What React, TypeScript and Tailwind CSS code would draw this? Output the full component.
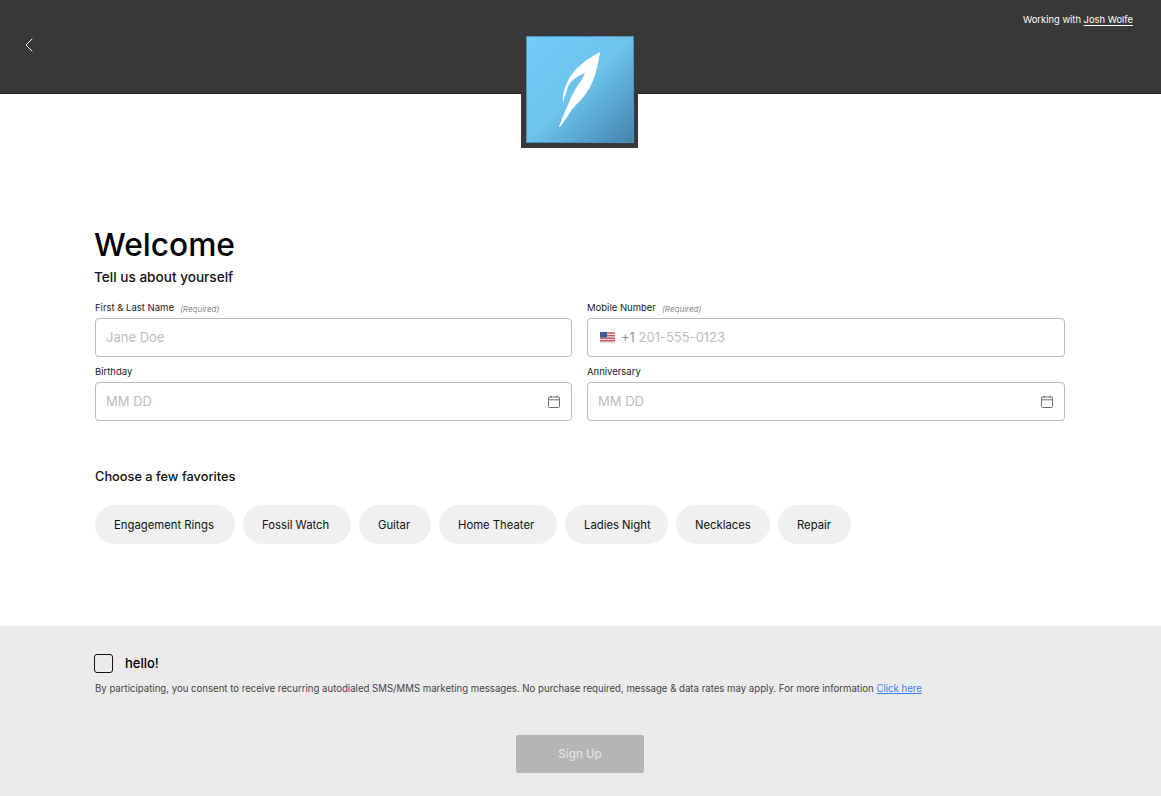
import { ChevronLeft } from "lucide-react"

const font = { fontFamily: "Inter, 'Noto Sans', sans-serif" }

const chips = [
  { name: "Engagement Rings", w: "w-[140px]" },
  { name: "Fossil Watch", w: "w-[108px]" },
  { name: "Guitar", w: "w-[72px]" },
  { name: "Home Theater", w: "w-[118px]" },
  { name: "Ladies Night", w: "w-[103px]" },
  { name: "Necklaces", w: "w-[94px]" },
  { name: "Repair", w: "w-[73px]" },
]

function Calendar() {
  return (
    <svg width="12" height="13" viewBox="0 0 12 13" fill="none" stroke="#6f6f6f" strokeWidth="1" className="shrink-0 -mt-[2px]">
      <rect x="0.5" y="2" width="11" height="10.5" rx="1" />
      <path d="M0.5 4.8H11.5M3 0.5V3M9 0.5V3" />
    </svg>
  )
}

function Flag() {
  return (
    <svg width="15" height="11" viewBox="0 0 15 11" className="shrink-0 -mt-[2px]">
      <rect width="15" height="11" rx="1" fill="#e9e4e6" />
      <path d="M0 1H15M0 3.6H15M0 6.2H15M0 8.8H15" stroke="#d0555f" strokeWidth="1.4" />
      <rect width="7" height="5.6" rx="0.5" fill="#3b5c9e" />
    </svg>
  )
}

function Label({ text, required }: { text: string; required?: boolean }) {
  return (
    <div className="h-[22px] flex items-center gap-[6px] text-[9.5px] text-[#222] pt-[3px]">
      <span>{text}</span>
      {required && <span className="text-[8px] italic text-[#8a8a8a]">(Required)</span>}
    </div>
  )
}

function Field({ children }: { children: React.ReactNode }) {
  return (
    <div className="h-[39px] flex items-center justify-between border border-[#b9b9b9] rounded-[4px] pl-[10px] pr-[11px] pt-[1px] text-[13px] text-[#bdbdbd] bg-white">
      {children}
    </div>
  )
}

export default function App() {
  return (
    <div className="min-h-[796px] flex flex-col bg-white" style={font}>
      <header className="relative h-[94px] shrink-0 bg-[#383838] border-b border-[#1c1c1c]">
        <div className="flex items-start justify-between pl-[17px] pr-[28px]">
          <ChevronLeft size={24} strokeWidth={1} color="#ffffff" className="mt-[33px]" />
          <div className="mt-[13px] text-[9.4px] text-white">
            Working with <span className="underline underline-offset-2">Josh Wolfe</span>
          </div>
        </div>
        <div className="absolute left-[521px] top-[31px] w-[117px] h-[117px] bg-[#383838] pl-[5px] pt-[5px]">
          <div className="w-[108px] h-[107px] bg-gradient-to-br from-[#72cdf7] via-[#6dc3ec] to-[#4484ad] flex items-center justify-center border border-[#4f93bb]">
            <svg width="48" height="84" viewBox="0 0 48 84">
              <path
                fill="#fff"
                d="M44 4C38 7 32 11 27 15C21 20 17 24 14 29C10 36 6 45 7 55C8 50 9 47 10 45C12 38 14 34 18 31C22 28 26 26 29 25C27 30 25 33 22 37C18 43 16 47 14 52C10 61 6 70 3 79L4 79C9 72 13 66 17 60C23 54 27 50 31 44C35 38 37 33 39 27C41 20 43 12 44 4Z"
              />
            </svg>
          </div>
        </div>
      </header>

      <main className="flex-1 pl-[95px] pr-[96px] pt-[132px] h-[532px]">
        <h1 className="text-[31.7px] leading-[38px] font-medium text-black -ml-[1px]">Welcome</h1>
        <h2 className="mt-[3px] text-[13.6px] leading-[20px] font-medium text-[#111] -ml-[1px]">Tell us about yourself</h2>
        <div className="mt-[9px] grid grid-cols-[477px_478px] gap-x-[15px] gap-y-[3px]">
          <div>
            <Label text="First & Last Name" required />
            <Field>Jane Doe</Field>
          </div>
          <div>
            <Label text="Mobile Number" required />
            <Field>
              <span className="ml-[2px] flex items-center gap-[6px]">
                <Flag />
                <span><span className="text-[#8f8f8f]">+1</span> 201-555-0123</span>
              </span>
            </Field>
          </div>
          <div>
            <Label text="Birthday" />
            <Field>MM DD<Calendar /></Field>
          </div>
          <div>
            <Label text="Anniversary" />
            <Field>MM DD<Calendar /></Field>
          </div>
        </div>
        <h3 className="mt-[46px] text-[12.8px] leading-[20px] font-medium text-[#111]">Choose a few favorites</h3>
        <div className="mt-[18px] flex gap-[8px]">
          {chips.map((c) => (
            <div key={c.name} className={`${c.w} h-[39px] rounded-full bg-[#f0f0f0] flex items-center pl-[19px] pt-[1px] text-[11.3px] text-[#111]`}>
              {c.name}
            </div>
          ))}
        </div>
      </main>

      <footer className="h-[170px] shrink-0 bg-[#ebebeb] pl-[95px] pr-[96px] pt-[28px]">
        <div className="flex items-center gap-[12px]">
          <div className="w-[19px] h-[19px] border-[1.5px] border-[#111] rounded-[3px] -ml-[1px]" />
          <span className="text-[13px] font-medium text-black">hello!</span>
        </div>
        <p className="mt-[7px] text-[9.62px] leading-[16px] text-[#444] whitespace-nowrap">
          By participating, you consent to receive recurring autodialed SMS/MMS marketing messages. No purchase required, message &amp; data rates may apply. For more information{" "}
          <span className="text-[#3b82f6] underline">Click here</span>
        </p>
        <div className="mt-[38px] ml-[421px]">
          <button className="w-[128px] h-[38px] bg-[#b5b5b5] rounded-[2px] pt-[2px] text-[11.6px] font-medium text-[#e2e2e2]">Sign Up</button>
        </div>
      </footer>
    </div>
  )
}
